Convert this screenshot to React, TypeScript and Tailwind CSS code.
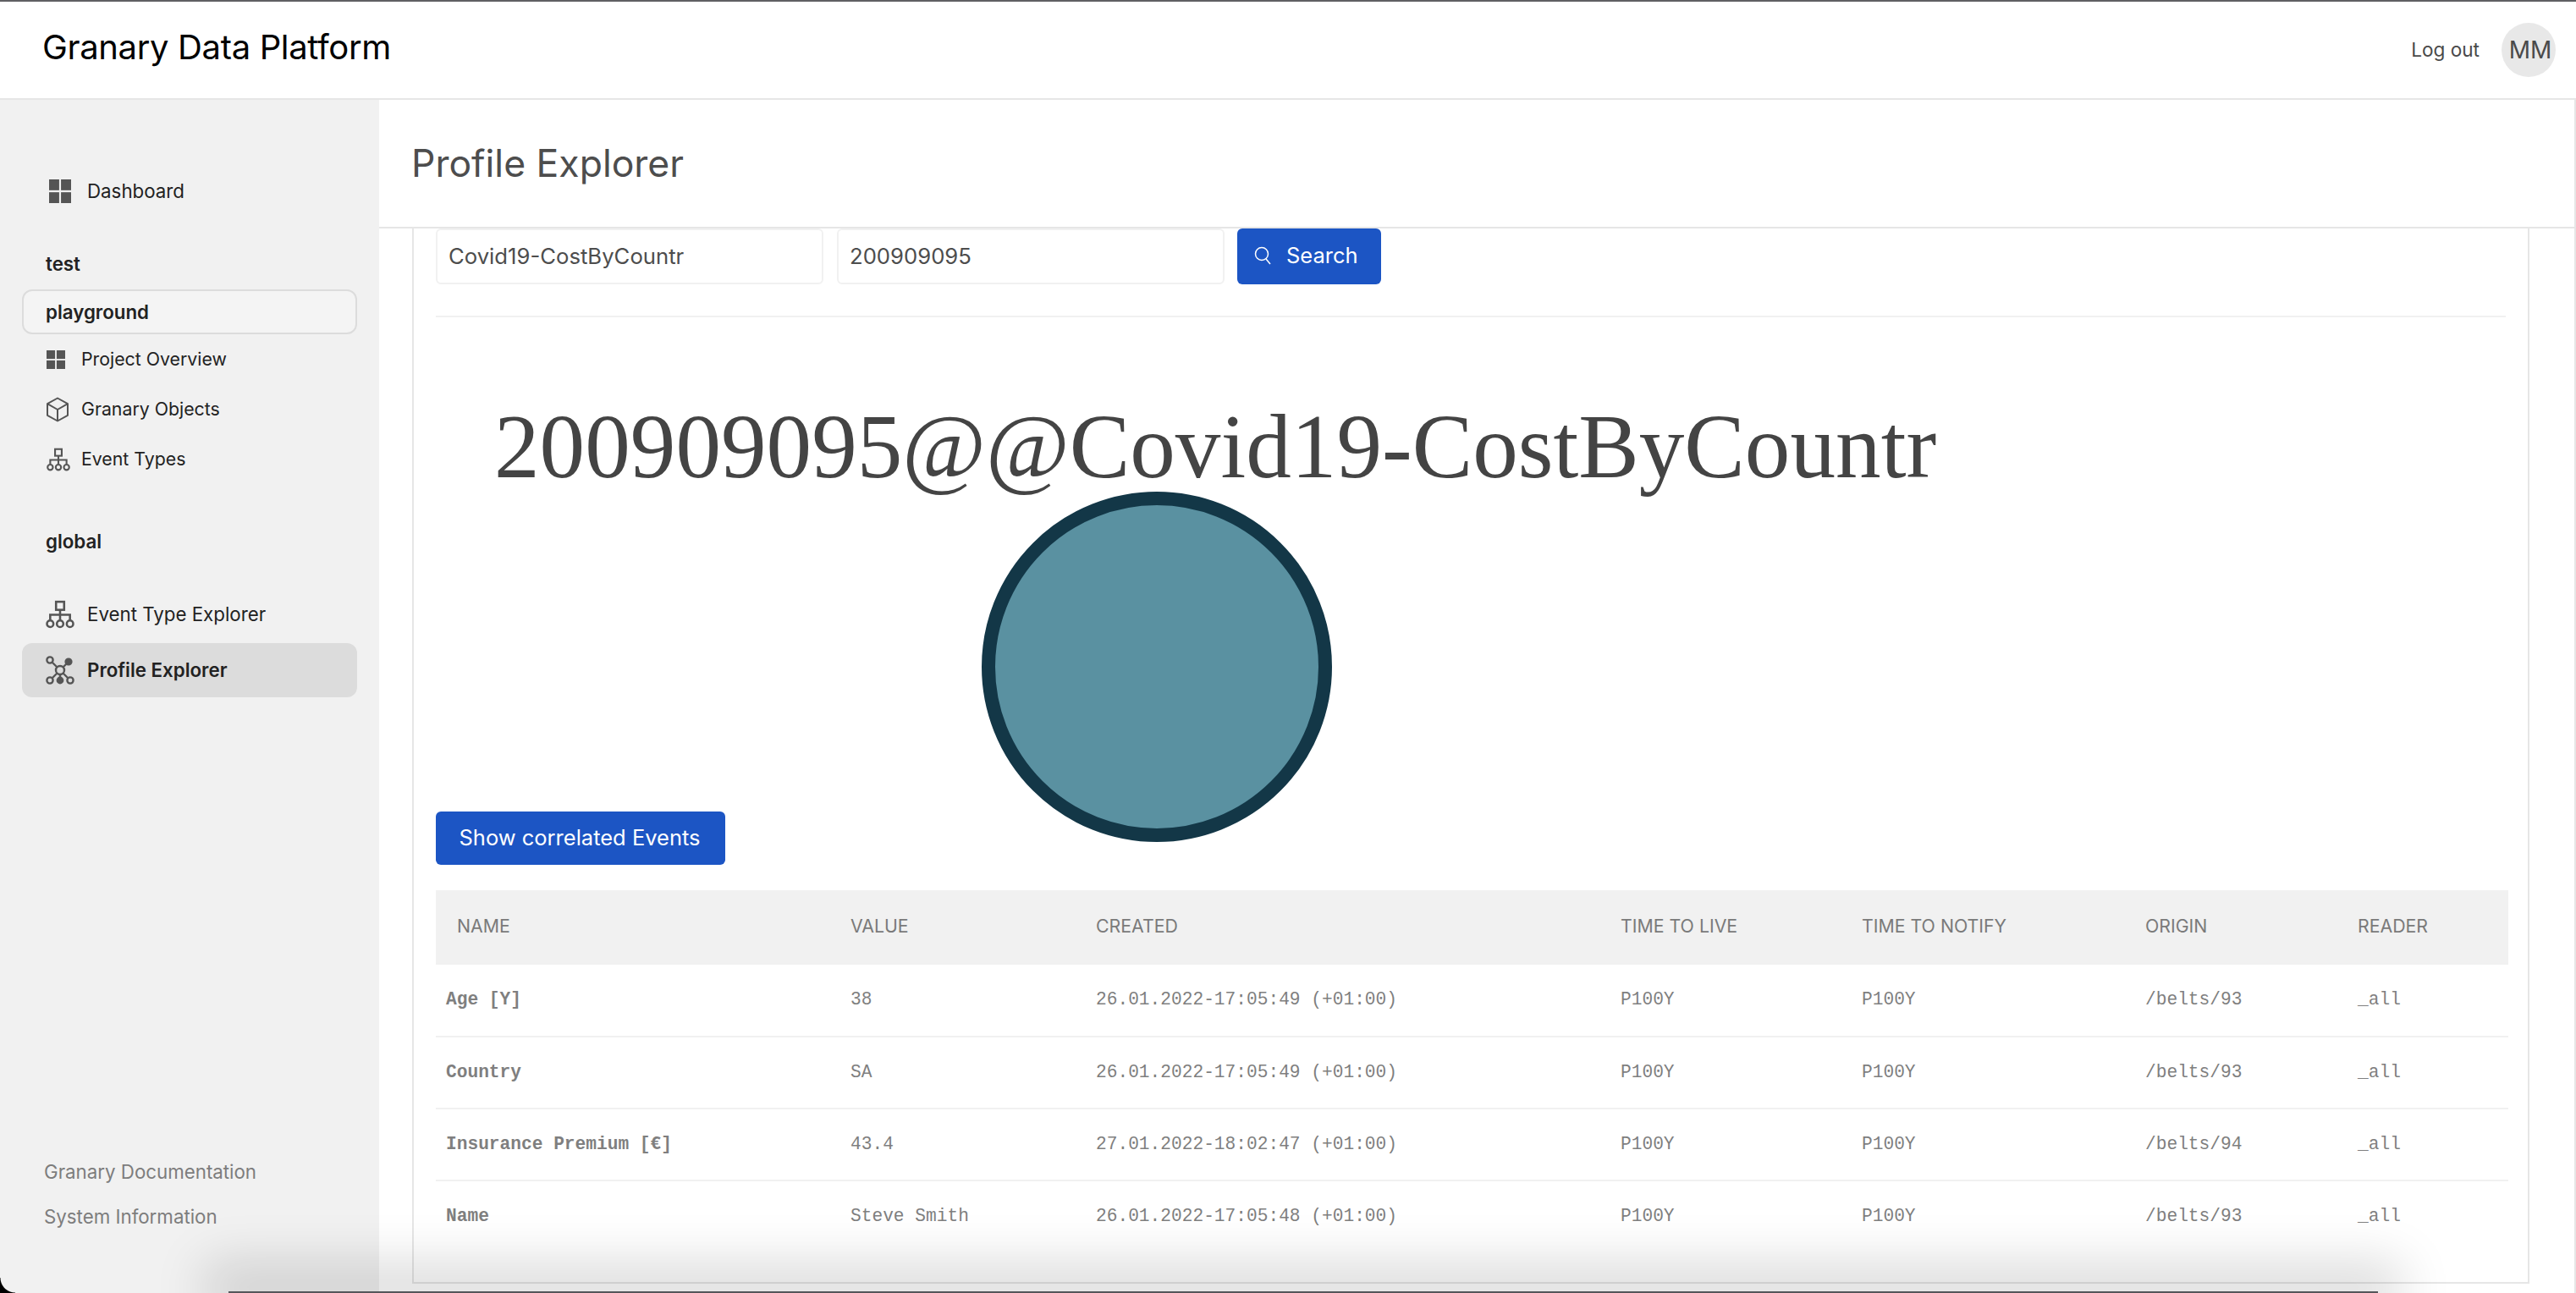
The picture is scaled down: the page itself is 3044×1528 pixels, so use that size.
import type { ReactNode } from "react";

const inter = "font-['Inter',sans-serif]";
const mono = "font-['Liberation_Mono',monospace]";

function GridIcon({ w, h }: { w: number; h: number }) {
  return (
    <svg width={w} height={h} viewBox="0 0 24 24" preserveAspectRatio="none" fill="#555555">
      <rect x="0" y="0" width="11" height="11" />
      <rect x="13" y="0" width="11" height="11" />
      <rect x="0" y="13" width="11" height="11" />
      <rect x="13" y="13" width="11" height="11" />
    </svg>
  );
}

function CubeIcon() {
  return (
    <svg width="26" height="30" viewBox="0 0 26 30" fill="none" stroke="#555555" strokeWidth="2" strokeLinejoin="round">
      <path d="M13 1.5 L25 8.2 V21.8 L13 28.5 L1 21.8 V8.2 Z" />
      <path d="M1 8.2 L13 15 L25 8.2 M13 15 V28.5" />
    </svg>
  );
}

function TreeIcon({ size }: { size: number }) {
  return (
    <svg width={size} height={size} viewBox="0 0 32 32" fill="none" stroke="#555555" strokeWidth="2.4">
      <rect x="11.5" y="2" width="9" height="9" />
      <path d="M16 11 V22 M5 22 V16.5 H27 V22" />
      <circle cx="5" cy="26.5" r="3.6" />
      <circle cx="16" cy="26.5" r="3.6" />
      <circle cx="27" cy="26.5" r="3.6" />
    </svg>
  );
}

function NetworkIcon() {
  return (
    <svg width="34" height="34" viewBox="0 0 34 34" fill="none" stroke="#555555" strokeWidth="2.4">
      <circle cx="17" cy="17" r="5" />
      <circle cx="5" cy="5" r="3.6" />
      <circle cx="27" cy="7" r="3.4" fill="#555555" />
      <circle cx="5" cy="29" r="3.6" />
      <circle cx="17" cy="29" r="3.2" fill="#555555" />
      <circle cx="29" cy="29" r="3.6" />
      <path d="M8 8 L13.5 13.5 M24.5 9.5 L20.5 13.5 M8 26 L13.5 20.5 M17 22 V26 M26 26 L20.5 20.5" />
    </svg>
  );
}

function SideItem({ icon, label, small, active }: { icon: ReactNode; label: string; small?: boolean; active?: boolean }) {
  if (small) {
    return (
      <div className="flex h-[59px] items-center pl-[29px] text-[21.3px] text-[#222222]">
        <span className="flex w-[41px] shrink-0 items-center">{icon}</span>
        {label}
      </div>
    );
  }
  return (
    <div className={`flex h-[64px] items-center rounded-xl pl-[28px] text-[22.3px] text-[#222222] ${active ? "bg-[#dcdcdc] font-semibold" : ""}`}>
      <span className="flex w-[49px] shrink-0 items-center">{icon}</span>
      {label}
    </div>
  );
}

const columns = [
  { label: "NAME", width: "w-[465px]" },
  { label: "VALUE", width: "w-[290px]" },
  { label: "CREATED", width: "w-[620px]" },
  { label: "TIME TO LIVE", width: "w-[285px]" },
  { label: "TIME TO NOTIFY", width: "w-[335px]" },
  { label: "ORIGIN", width: "w-[251px]" },
  { label: "READER", width: "w-[203px]" },
];

const rows = [
  ["Age [Y]", "38", "26.01.2022-17:05:49 (+01:00)", "P100Y", "P100Y", "/belts/93", "_all"],
  ["Country", "SA", "26.01.2022-17:05:49 (+01:00)", "P100Y", "P100Y", "/belts/93", "_all"],
  ["Insurance Premium [€]", "43.4", "27.01.2022-18:02:47 (+01:00)", "P100Y", "P100Y", "/belts/94", "_all"],
  ["Name", "Steve Smith", "26.01.2022-17:05:48 (+01:00)", "P100Y", "P100Y", "/belts/93", "_all"],
];

export default function App() {
  return (
    <div className={`relative flex h-[1528px] w-[3044px] flex-col overflow-hidden bg-white ${inter}`}>
      {/* Header */}
      <header className="flex h-[118px] shrink-0 items-center justify-between border-t-2 border-b-2 border-t-[#5f5f63] border-b-[#e6e6e6] pr-[24px] pl-[50px]">
        <div className="pb-[6px] text-[40px] tracking-[-0.35px] text-black">Granary Data Platform</div>
        <div className="flex items-center gap-[26px]">
          <span className="text-[22.6px] text-[#4a4a4a]">Log out</span>
          <div className="flex h-[64px] w-[64px] items-center justify-center rounded-full bg-[#e8e8e8] pl-[4px] text-[28px] text-[#4a4a4a]">MM</div>
        </div>
      </header>

      <div className="flex min-h-0 flex-1">
        {/* Sidebar */}
        <aside className="flex w-[448px] shrink-0 flex-col bg-[#f1f1f1] px-[26px] pb-[74px]">
          <div className="mt-[76px]">
            <SideItem
              icon={
                <span className="ml-[4px] flex">
                  <GridIcon w={26} h={28} />
                </span>
              }
              label="Dashboard"
            />
          </div>
          <div className="mt-[34px] pl-[28px] text-[22.3px] leading-[40px] font-semibold text-[#222222]">test</div>
          <div className="mt-[10px] flex h-[53px] items-center rounded-xl border-2 border-[#dcdcdc] bg-[#f4f4f4] pl-[26px] text-[22.3px] font-semibold text-[#222222]">
            playground
          </div>
          <div>
            <SideItem small icon={<GridIcon w={22} h={22} />} label="Project Overview" />
            <SideItem small icon={<CubeIcon />} label="Granary Objects" />
            <SideItem small icon={<TreeIcon size={28} />} label="Event Types" />
          </div>
          <div className="mt-[48px] pl-[28px] text-[22.3px] leading-[40px] font-semibold text-[#222222]">global</div>
          <div className="mt-[34px] flex flex-col gap-[2px]">
            <SideItem icon={<TreeIcon size={34} />} label="Event Type Explorer" />
            <SideItem active icon={<NetworkIcon />} label="Profile Explorer" />
          </div>
          <div className="mt-auto flex flex-col gap-[20px] pl-[26px] text-[22.3px] leading-[33px] text-[#7d7d7d]">
            <div>Granary Documentation</div>
            <div>System Information</div>
          </div>
        </aside>

        {/* Main */}
        <main className="flex min-w-0 flex-1 flex-col border-r-2 border-[#e6e6e6]">
          <div className="flex h-[152px] shrink-0 items-center border-b-2 border-[#e6e6e6] pl-[38px] text-[44.5px] text-[#4d4d4d]">
            Profile Explorer
          </div>
          <div className="ml-[39px] h-[1247px] w-[2502px] border-r-2 border-b-2 border-l-2 border-[#e6e6e6] px-[26px]">
            <div className="flex h-[105px] gap-[16px] border-b-2 border-[#f1f1f1]">
              <div className="flex h-[66px] w-[458px] items-center rounded-md border-2 border-[#f1f1f1] pl-[13px] text-[25.7px] text-[#4d4d4d]">
                Covid19-CostByCountr
              </div>
              <div className="flex h-[66px] w-[458px] items-center rounded-md border-2 border-[#f1f1f1] pl-[13px] text-[25.7px] text-[#4d4d4d]">
                200909095
              </div>
              <button className="-ml-[1px] flex h-[66px] w-[170px] items-center gap-[17px] rounded-md bg-[#1c55c4] pb-[2px] pl-[19px] text-[25.5px] text-white">
                <svg width="22" height="24" viewBox="0 0 22 24" fill="none" stroke="white" strokeWidth="1.5">
                  <circle cx="10" cy="10" r="7.5" />
                  <path d="M15 16 L20 22" />
                </svg>
                Search
              </button>
            </div>

            {/* Profile graph */}
            <svg width="2448" height="584" viewBox="0 0 2448 584" className="block overflow-visible">
              <text x="69" y="189" fontFamily="'Liberation Serif', serif" fontSize="107.2" fill="#444444">
                200909095@@Covid19-CostByCountr
              </text>
              <circle cx="852" cy="413" r="199" fill="#5a91a1" stroke="#133747" strokeWidth="16" />
            </svg>

            <button className="block h-[63px] w-[342px] rounded-md bg-[#1c55c4] pr-[2px] text-[25.5px] text-white">Show correlated Events</button>

            <table className="mt-[30px] w-[2449px] table-fixed border-collapse">
              <thead>
                <tr className="h-[88px] bg-[#f1f1f1]">
                  {columns.map((col) => (
                    <th key={col.label} className={`${col.width} pb-[2px] pl-[25px] text-left text-[21.3px] font-normal text-[#7a7a7a]`}>
                      {col.label}
                    </th>
                  ))}
                </tr>
              </thead>
              <tbody>
                {rows.map((row, i) => (
                  <tr key={row[0]} className={`h-[85px] ${i < rows.length - 1 ? "border-b-2 border-[#f1f1f1]" : ""} ${mono} text-[21.2px] text-[#7f7f7f]`}>
                    {row.map((cell, j) => (
                      <td key={j} className={j === 0 ? "pl-[12px] font-bold" : "pl-[25px]"}>
                        {cell}
                      </td>
                    ))}
                  </tr>
                ))}
              </tbody>
            </table>
          </div>
        </main>
      </div>

      {/* Window shadow along the bottom edge */}
      <div className="pointer-events-none absolute top-[1526px] right-[234px] left-[270px] h-[2px] bg-[#55565a] shadow-[0_-6px_60px_28px_rgba(0,0,0,0.15)]" />
      <div className="pointer-events-none absolute bottom-0 left-0 h-[18px] w-[18px] bg-[radial-gradient(circle_at_100%_0,transparent_17px,black_18px)]" />
    </div>
  );
}
